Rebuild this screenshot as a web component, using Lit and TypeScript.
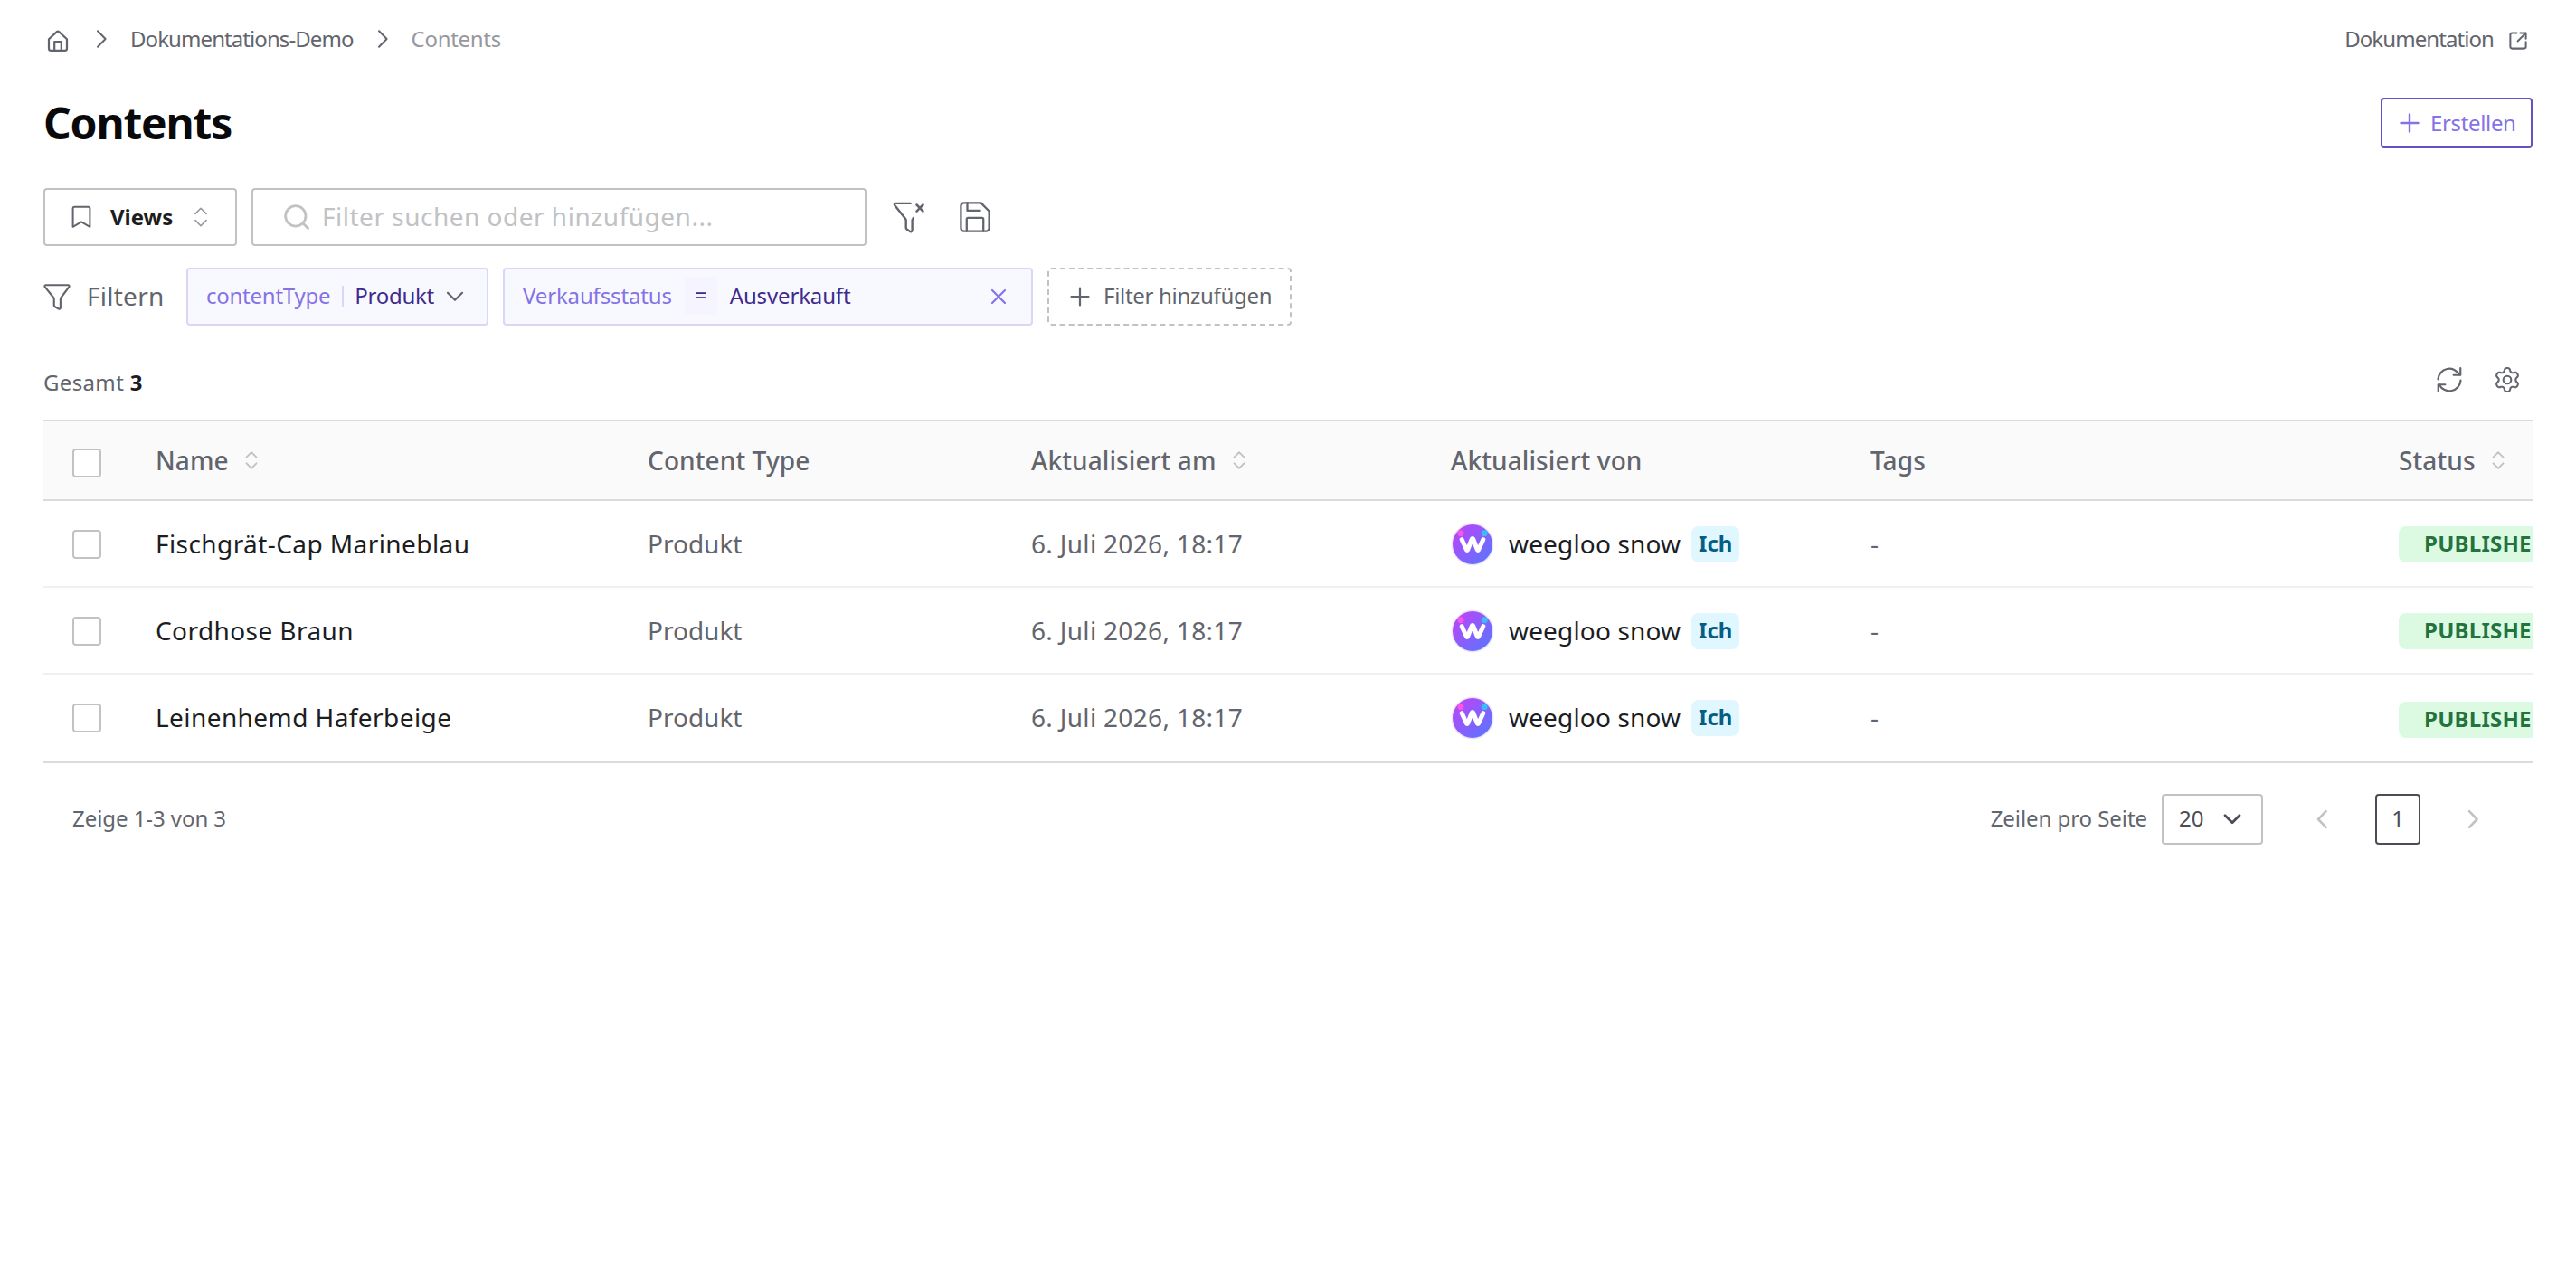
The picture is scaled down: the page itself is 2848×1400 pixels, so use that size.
import { LitElement, html, css, svg, nothing } from "lit";
import { customElement, property } from "lit/decorators.js";

// Outline of a six-toothed cog around (12, 12)
const cogPath = () => {
  const points: string[] = [];
  for (let deg = 0; deg < 360; deg += 3) {
    const a = (deg * Math.PI) / 180;
    const r = 9.5 + 1.75 * Math.tanh(1.5 * Math.cos(6 * a) + 0.2);
    points.push(
      `${(12 + r * Math.sin(a)).toFixed(2)} ${(12 - r * Math.cos(a)).toFixed(2)}`
    );
  }
  return `M${points.join("L")}z`;
};

const ICONS = {
  home: svg`<path d="M2 10.2 10.8 2.1a1.8 1.8 0 0 1 2.4 0L22 10.2v10.3a2.4 2.4 0 0 1-2.4 2.4H4.4A2.4 2.4 0 0 1 2 20.5z" /><path d="M8.2 22.8v-9.6h7.6v9.6" />`,
  chevronRight: svg`<path d="m8 3.2 8.6 8.8L8 20.8" />`,
  chevronLeft: svg`<path d="m15.6 3.2-8.6 8.8 8.6 8.8" />`,
  chevronDown: svg`<path d="m4 7.8 8 8 8-8" />`,
  external: svg`<path d="M10.5 2.6H4.8a2.2 2.2 0 0 0-2.2 2.2v14.4a2.2 2.2 0 0 0 2.2 2.2h14.4a2.2 2.2 0 0 0 2.2-2.2v-5.7M14.5 2.6h6.9v6.9M21.4 2.6l-9.9 9.9" />`,
  plus: svg`<path d="M12 2.5v19M2.5 12h19" />`,
  close: svg`<path d="m5 5 14 14M19 5 5 19" />`,
  bookmark: svg`<path d="M2.6 2.2A1.7 1.7 0 0 1 4.3.8h15.4a1.7 1.7 0 0 1 1.7 1.4v20.6L12 17.4l-9.4 5.4z" />`,
  sort: svg`<path d="m5.4 8 6.6-6.6L18.6 8M5.4 16l6.6 6.6 6.6-6.6" />`,
  search: svg`<circle cx="11" cy="11" r="9.6" /><path d="m18 18 4.8 4.8" />`,
  funnel: svg`<path d="M2.2 1.8h19.6c1 0 1.4.8.8 1.7l-7 9.3c-.4.5-.5 1-.5 1.6v7.4c0 1-.8 1.4-1.6 1l-3.2-1.8c-.6-.3-.9-.8-.9-1.5v-5.1c0-.6-.1-1.1-.5-1.6L1.4 3.5c-.6-.9-.2-1.7.8-1.7z" />`,
  funnelX: svg`<path d="M13.2 1.9H2.3c-1 0-1.3.8-.7 1.6l7.7 9.7c.3.4.5.9.5 1.4v5.2c0 .6.3 1.1.8 1.4l2.2 1.4c.8.5 1.6 0 1.6-.9v-7.1c0-.5.1-1 .5-1.4l.3-.5" /><path d="m17.7 3 4.6 4.7M22.3 3l-4.6 4.7" stroke-width="1.7" />`,
  save: svg`<path d="M16.6 1H3.4A2.4 2.4 0 0 0 1 3.4v17.2A2.4 2.4 0 0 0 3.4 23h17.2a2.4 2.4 0 0 0 2.4-2.4V7.4z" /><path d="M6 1v6h10M5.5 23v-9.4a1 1 0 0 1 1-1h11a1 1 0 0 1 1 1V23" />`,
  refresh: svg`<path d="M1.3 11.5a10.7 10.7 0 0 1 20.2-4.2M22.7 12.5a10.7 10.7 0 0 1-20.2 4.2" /><path d="M22.5 1v6.5H16M1.5 23v-6.5H8" />`,
  gear: svg`<circle cx="12" cy="12" r="3.7" /><path d=${cogPath()} />`,
};

type IconName = keyof typeof ICONS;

@customElement("ui-icon")
export class UiIcon extends LitElement {
  @property() name: IconName = "plus";
  @property({ type: Number }) stroke = 2;

  static styles = css`
    :host {
      display: inline-flex;
      flex: none;
      width: 24px;
      height: 24px;
    }

    svg {
      width: 100%;
      height: 100%;
      overflow: visible;
      fill: none;
      stroke: currentColor;
      stroke-linecap: round;
      stroke-linejoin: round;
    }
  `;

  render() {
    return html`<svg viewBox="0 0 24 24" stroke-width=${this.stroke}>
      ${ICONS[this.name]}
    </svg>`;
  }
}

@customElement("user-avatar")
export class UserAvatar extends LitElement {
  static styles = css`
    :host {
      display: inline-flex;
      flex: none;
      width: 48px;
      height: 48px;
    }
  `;

  render() {
    return html`<svg width="48" height="48" viewBox="0 0 48 48">
      <defs>
        <linearGradient id="fill" x1="0" y1="0" x2="1" y2="1">
          <stop offset="0.1" stop-color="#b946f8" />
          <stop offset="0.9" stop-color="#5d74ff" />
        </linearGradient>
      </defs>
      <circle cx="24" cy="24" r="23.5" fill="#ece6fa" />
      <circle cx="24" cy="24" r="22" fill="url(#fill)" />
      <circle cx="11" cy="11.7" r="3.4" fill="#fb55e6" />
      <circle cx="37.2" cy="11.7" r="3.4" fill="#38bdf8" />
      <path
        d="m12.2 18.7 5.2 11.3q.6 1 1.2 0l4.8-12q.6-1 1.2 0l4.8 12q.6 1 1.2 0l5.2-11.3"
        fill="none"
        stroke="#fff"
        stroke-width="5"
        stroke-linecap="round"
        stroke-linejoin="round"
      />
    </svg>`;
  }
}

interface Entry {
  name: string;
  type: string;
  updatedAt: string;
  updatedBy: string;
  status: string;
}

@customElement("app-root")
export class AppRoot extends LitElement {
  static styles = css`
    :host {
      display: block;
      box-sizing: border-box;
      height: 1400px;
      padding: 0 48px;
      background: #fff;
      color: #62656d;
      font-family: "Noto Sans", sans-serif;
      font-size: 24px;
      line-height: 32px;
      white-space: nowrap;
      overflow: hidden;
    }

    * {
      box-sizing: border-box;
    }

    .row {
      display: flex;
      align-items: center;
    }

    /* Breadcrumb */
    .topbar {
      justify-content: space-between;
      height: 86px;
      letter-spacing: -0.92px;
    }

    .crumbs {
      gap: 20px;
    }

    .crumbs .home {
      margin: 3px 4px 0 4px;
    }

    .crumbs .current {
      color: #96989e;
      letter-spacing: -0.3px;
    }

    .docs {
      gap: 16px;
      padding-right: 5px;
    }

    .docs ui-icon {
      width: 22px;
      height: 22px;
      margin-top: 4px;
    }

    /* Page title */
    .heading {
      justify-content: space-between;
      height: 56px;
      margin-top: 22px;
    }

    h1 {
      margin: 0;
      color: #09090b;
      font-size: 48px;
      line-height: 56px;
      font-weight: 700;
      letter-spacing: -1.2px;
    }

    .create {
      width: 168px;
      height: 56px;
      padding: 0 0 1px 18px;
      gap: 11px;
      border: 2px solid #6651c4;
      border-radius: 4px;
      color: #8573e6;
      letter-spacing: -0.35px;
    }

    /* Toolbar */
    .toolbar {
      height: 64px;
      margin-top: 44px;
    }

    .views {
      width: 214px;
      height: 64px;
      padding-left: 28px;
      border: 2px solid #c1c2c5;
      border-radius: 4px;
      color: #62656d;
    }

    .views b {
      margin: 0 19px 1px 20px;
      color: #1c1d1f;
      font-weight: 700;
    }

    .views .sort {
      color: #96989e;
      width: 24px;
      height: 22px;
    }

    .search {
      width: 680px;
      height: 64px;
      margin: 0 29px 0 16px;
      padding-left: 34px;
      gap: 14px;
      border: 2px solid #c1c2c5;
      border-radius: 4px;
      color: #c1c2c5;
      font-size: 28px;
      letter-spacing: 0.5px;
    }

    .search span {
      margin-bottom: 2px;
    }

    .search ui-icon {
      width: 28px;
      height: 28px;
    }

    .tool {
      width: 36px;
      height: 36px;
    }

    .tool.save {
      width: 34px;
      height: 34px;
      margin-left: 38px;
    }

    /* Active filters */
    .filters {
      height: 64px;
      margin-top: 24px;
    }

    .filters span:not(.divider) {
      margin-bottom: 2px;
    }

    .filters .label {
      gap: 18px;
      width: 158px;
      font-size: 28px;
      letter-spacing: 0.25px;
    }

    .filters .label ui-icon {
      width: 30px;
      height: 30px;
    }

    .chip {
      height: 64px;
      margin-right: 16px;
      padding: 0 20px;
      border: 2px solid #d9d6fa;
      border-radius: 4px;
      background: #f8f8ff;
      color: #8573e6;
      letter-spacing: -0.15px;
    }

    .chip .value {
      color: #3f2b8c;
    }

    .chip.type {
      width: 334px;
      letter-spacing: -0.25px;
    }

    .chip.type .value {
      margin-right: 11px;
      margin-left: 12px;
    }

    .chip.type ui-icon {
      color: #62656d;
    }

    .divider {
      flex: none;
      width: 2px;
      height: 24px;
      margin-left: 13px;
      background: #d9d6fa;
    }

    .chip.state {
      width: 586px;
    }

    .operator {
      width: 36px;
      height: 42px;
      margin: 0 14px;
      background: #f5f4ff;
      color: #3f2b8c;
      line-height: 40px;
      text-align: center;
    }

    .chip.state ui-icon {
      margin-left: auto;
      margin-right: 4px;
    }

    .add {
      width: 270px;
      height: 64px;
      padding-left: 22px;
      gap: 14px;
      border: 2px dashed #c1c2c5;
      border-radius: 4px;
      letter-spacing: -0.3px;
    }

    /* Table */
    .summary {
      height: 104px;
      padding: 16px 14px 0 0;
      justify-content: space-between;
    }

    .summary .total {
      padding-top: 6px;
      letter-spacing: 0.35px;
    }

    .summary b {
      color: #1c1d1f;
    }

    .actions {
      gap: 36px;
    }

    .actions ui-icon {
      width: 28px;
      height: 28px;
    }

    .table {
      overflow: hidden;
      border-top: 2px solid #dadbdd;
      border-bottom: 2px solid #dadbdd;
      font-size: 28px;
    }

    .line {
      display: grid;
      grid-template-columns: 92px 544px 424px 464px 464px 584px 300px;
      align-items: center;
      height: 96px;
      border-bottom: 2px solid #f0f0f1;
    }

    .line:last-child {
      border-bottom-color: transparent;
    }

    .line.head {
      height: 88px;
      border-bottom-color: #dadbdd;
      background: #fafafa;
      font-weight: 500;
      letter-spacing: 0.1px;
    }

    .cell {
      display: flex;
      align-items: center;
      padding-left: 32px;
    }

    .cell ui-icon {
      width: 22px;
      height: 20px;
      margin-left: 14px;
      color: #c1c2c5;
    }

    .check {
      width: 32px;
      height: 32px;
      margin-top: 2px;
      border: 2px solid #c1c2c5;
      border-radius: 4px;
      background: #fff;
    }

    .head .check {
      margin-top: 6px;
    }

    .dark {
      color: #1c1d1f;
    }

    .name {
      letter-spacing: 0.42px;
    }

    .date {
      letter-spacing: 0.32px;
    }

    .user {
      margin: 0 12px 0 16px;
      letter-spacing: 0.15px;
    }

    .me,
    .status {
      height: 40px;
      margin-top: 2px;
      border-radius: 8px;
      font-size: 24px;
      line-height: 37px;
      font-weight: 700;
    }

    .me {
      padding: 0 8px;
      background: #e0f7ff;
      color: #075e82;
    }

    .status {
      padding: 0 28px;
      background: #dcfae2;
      color: #227340;
      letter-spacing: 0.25px;
    }

    .line:last-child .status {
      margin-top: 6px;
    }

    user-avatar {
      margin-top: 2px;
    }

    /* Pagination */
    .footer {
      height: 56px;
      margin-top: 34px;
      padding: 0 54px 0 32px;
    }

    .footer span {
      margin-bottom: 2px;
      letter-spacing: -0.06px;
    }

    .footer .range {
      flex: 1;
    }

    .size {
      width: 112px;
      height: 56px;
      margin: 0 54px 0 16px;
      padding: 0 20px 0 17px;
      justify-content: space-between;
      border: 2px solid #c1c2c5;
      border-radius: 4px;
      color: #4b4d54;
    }

    .nav {
      color: #c1c2c5;
    }

    .page {
      width: 50px;
      height: 56px;
      margin: 0 46px;
      border: 2px solid #4b4d54;
      border-radius: 4px;
      color: #4b4d54;
      line-height: 50px;
      text-align: center;
    }
  `;

  private columns = [
    { label: "Name", sortable: true },
    { label: "Content Type", sortable: false },
    { label: "Aktualisiert am", sortable: true },
    { label: "Aktualisiert von", sortable: false },
    { label: "Tags", sortable: false },
    { label: "Status", sortable: true },
  ];

  private entries: Entry[] = [
    "Fischgrät-Cap Marineblau",
    "Cordhose Braun",
    "Leinenhemd Haferbeige",
  ].map((name) => ({
    name,
    type: "Produkt",
    updatedAt: "6. Juli 2026, 18:17",
    updatedBy: "weegloo snow",
    status: "PUBLISHED",
  }));

  private renderEntry(entry: Entry) {
    return html`
      <div class="line">
        <div class="cell"><span class="check"></span></div>
        <div class="cell dark name">${entry.name}</div>
        <div class="cell">${entry.type}</div>
        <div class="cell date">${entry.updatedAt}</div>
        <div class="cell dark">
          <user-avatar></user-avatar>
          <span class="user">${entry.updatedBy}</span>
          <span class="me">Ich</span>
        </div>
        <div class="cell">-</div>
        <div class="cell"><span class="status">${entry.status}</span></div>
      </div>
    `;
  }

  render() {
    return html`
      <div class="row topbar">
        <div class="row crumbs">
          <ui-icon class="home" name="home" stroke="2.2"></ui-icon>
          <ui-icon name="chevronRight"></ui-icon>
          <span>Dokumentations-Demo</span>
          <ui-icon name="chevronRight"></ui-icon>
          <span class="current">Contents</span>
        </div>
        <div class="row docs">
          <span>Dokumentation</span>
          <ui-icon name="external" stroke="2.2"></ui-icon>
        </div>
      </div>

      <div class="row heading">
        <h1>Contents</h1>
        <div class="row create">
          <ui-icon name="plus" stroke="2.4"></ui-icon>
          <span>Erstellen</span>
        </div>
      </div>

      <div class="row toolbar">
        <div class="row views">
          <ui-icon name="bookmark"></ui-icon>
          <b>Views</b>
          <ui-icon class="sort" name="sort" stroke="1.8"></ui-icon>
        </div>
        <div class="row search">
          <ui-icon name="search" stroke="2.4"></ui-icon>
          <span>Filter suchen oder hinzufügen...</span>
        </div>
        <ui-icon class="tool" name="funnelX" stroke="1.6"></ui-icon>
        <ui-icon class="tool save" name="save" stroke="1.6"></ui-icon>
      </div>

      <div class="row filters">
        <div class="row label">
          <ui-icon name="funnel" stroke="1.7"></ui-icon>
          <span>Filtern</span>
        </div>
        <div class="row chip type">
          <span>contentType</span>
          <span class="divider"></span>
          <span class="value">Produkt</span>
          <ui-icon name="chevronDown" stroke="2.2"></ui-icon>
        </div>
        <div class="row chip state">
          <span>Verkaufsstatus</span>
          <span class="operator">=</span>
          <span class="value">Ausverkauft</span>
          <ui-icon name="close" stroke="2.2"></ui-icon>
        </div>
        <div class="row add">
          <ui-icon name="plus" stroke="2.2"></ui-icon>
          <span>Filter hinzufügen</span>
        </div>
      </div>

      <div class="row summary">
        <span class="total">Gesamt <b>${this.entries.length}</b></span>
        <div class="row actions">
          <ui-icon name="refresh" stroke="1.9"></ui-icon>
          <ui-icon name="gear" stroke="1.8"></ui-icon>
        </div>
      </div>

      <div class="table">
        <div class="line head">
          <div class="cell"><span class="check"></span></div>
          ${this.columns.map(
            ({ label, sortable }) => html`
              <div class="cell">
                ${label}
                ${sortable
                  ? html`<ui-icon name="sort" stroke="2.3"></ui-icon>`
                  : nothing}
              </div>
            `
          )}
        </div>
        ${this.entries.map((entry) => this.renderEntry(entry))}
      </div>

      <div class="row footer">
        <span class="range">Zeige 1-3 von 3</span>
        <span>Zeilen pro Seite</span>
        <div class="row size">
          <span>20</span>
          <ui-icon name="chevronDown" stroke="2.8"></ui-icon>
        </div>
        <ui-icon class="nav" name="chevronLeft" stroke="2.6"></ui-icon>
        <div class="page">1</div>
        <ui-icon class="nav" name="chevronRight" stroke="2.6"></ui-icon>
      </div>
    `;
  }
}
